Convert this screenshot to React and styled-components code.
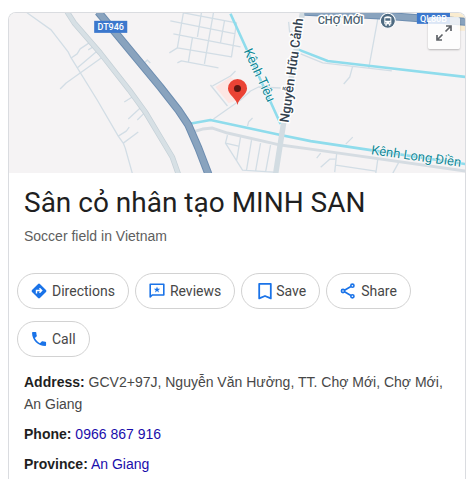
import React from "react";
import styled, { createGlobalStyle } from "styled-components";

const GlobalStyle = createGlobalStyle`
  * { box-sizing: border-box; }
  body {
    margin: 0;
    background: #fff;
    font-family: "Liberation Sans", Arial, sans-serif;
    font-size: 14px;
    color: #474747;
  }
`;

const Card = styled.article`
  margin: 12px 8px 0;
  min-height: calc(100vh - 12px);
  border: 1px solid #dadce0;
  border-bottom: 0;
  border-radius: 8px 8px 0 0;
  overflow: hidden;
`;

const MapFrame = styled.div`
  position: relative;
  height: 160px;
  background: #f5f3f4;
`;

const MapDrawing = styled.svg`
  display: block;
  width: 100%;
  height: 100%;
  font-family: Roboto, sans-serif;
`;

const Roads = styled.g`
  fill: none;
  stroke: ${(p) => p.$color};
  stroke-width: ${(p) => p.$width};
  stroke-linejoin: round;
`;

const MapLabel = styled.text`
  font-size: ${(p) => p.$size}px;
  font-weight: ${(p) => p.$weight || 500};
  fill: ${(p) => p.$color};
  stroke: #fff;
  stroke-width: ${(p) => p.$halo || 0};
  stroke-linejoin: round;
  paint-order: stroke;
`;

const ExpandButton = styled.button`
  position: absolute;
  top: 4px;
  right: 5px;
  width: 32px;
  height: 32px;
  padding: 0;
  display: grid;
  place-items: center;
  border: 0;
  border-radius: 2px;
  background: rgba(255, 255, 255, 0.82);
  box-shadow: 0 1px 2px rgba(0, 0, 0, 0.25);
  cursor: pointer;
`;

const Heading = styled.header`
  padding: 12px 15px 0;
`;

const Title = styled.h1`
  margin: 0;
  font: 400 28px/36px Roboto, sans-serif;
  color: #1f1f1f;
`;

const Category = styled.p`
  margin: 4px 0 0;
  line-height: 22px;
  color: #5e5e5e;
`;

const Actions = styled.div`
  display: flex;
  flex-wrap: wrap;
  gap: 12px 6px;
  padding: 26px 8px 0;
`;

const ActionButton = styled.button`
  display: flex;
  align-items: center;
  gap: 3px;
  height: 36px;
  padding: 0 13px 0 11px;
  border: 1px solid #d2d2d2;
  border-radius: 18px;
  background: #fff;
  color: #474747;
  font: 400 14px/20px Roboto, sans-serif;
  cursor: pointer;
`;

const ActionIcon = styled.svg`
  width: 20px;
  height: 20px;
  color: #1a73e8;
`;

const Facts = styled.div`
  display: flex;
  flex-direction: column;
  gap: 8px;
  padding: 14px 15px 3px;
`;

const Fact = styled.p`
  margin: 0;
  line-height: 22px;
`;

const Label = styled.strong`
  color: #1f1f1f;
`;

const FactLink = styled.a`
  color: #1a0dab;
  text-decoration: none;
`;

function AreaMap() {
  return (
    <MapDrawing viewBox="9 13 455 160" preserveAspectRatio="xMidYMid slice" role="img" aria-label="Map">
      <rect x="-500" y="13" width="1500" height="160" fill="#f5f3f4" />
      <path d="M215 87L230 77L247 88L241 99L228 103Z" fill="#fde6e3" />
      <path d="M445 13H465V20L445 18ZM455 25H465V31H458Z" fill="#faecd0" />
      <Roads $color="#d2dde5" $width={1.3}>
        <path d="M27 13L51 30L68 52L71 58L97 100L118 136L123 143L125 148L132 173" />
        <path d="M71 58L77 54L80 49L89 43M88 50L93 47M77 68L97 51M60 89L66 83L101 58" />
        <path d="M124 102L132 97M128 119L141 107M137 120L144 113M118 136L126 131L129 127M123 143L138 132" />
        <path d="M144 63L147 60L150 63" />
        <path d="M169 53L177 48L183 13L236 23L231 57L177 48M170 21L235 34M173 34L240 47" />
        <path d="M201 13L197 37M213 13L204 64M224 21L220 43M192 38L188 62M177 63L181 61L218 68" />
        <path d="M235 71L230 76L212 86M210 85L227 106M213 119L240 100L250 91L258 87L280 88M288 22L289 32L294 33" />
        <path d="M227 135L225 143L242 170L273 172M225 143L238 146M240 137L236 161M251 140L246 170M260 143L255 171M270 145L265 172" />
        <path d="M247 126L248 122L252 118M345 144L352 137M316 158L320 153M320 167L329 159L335 159" />
        <path d="M336 153L334 172M335 165L375 171M377 159L375 173M398 162L392 173" />
        <path d="M377 19L368 68M352 66L349 77L343 84M300 54L322 63L391 71" />
      </Roads>
      <Roads $color="#c5d0d7" $width={5.5}>
        <path d="M67 12L74 23L100 53L129 90L145 112L160 137L172 157L178 174" />
      </Roads>
      <Roads $color="#d7e0e5" $width={4}>
        <path d="M67 12L74 23L100 53L129 90L145 112L160 137L172 157L178 174" />
      </Roads>
      <Roads $color="#d5dce2" $width={3}>
        <path d="M192 132L202 129L212 128L227 133L280 145L310 149L465 171" />
      </Roads>
      <Roads $color="#8fdcec" $width={2.6}>
        <path d="M230 14L280 124M188 124L210 120L280 135L310 141L370 150L465 164" />
        <path d="M296 49L327 61L370 66L465 77" />
      </Roads>
      <Roads $color="#d2dce2" $width={5.5}>
        <path d="M302 12L283 123L275 174" />
      </Roads>
      <Roads $color="#6d8db0" $width={8}>
        <path d="M98 12L160 87L178 110L188 125L198 148L208 174M304 12L385 16L465 22" />
      </Roads>
      <Roads $color="#89a3be" $width={6}>
        <path d="M98 12L160 87L178 110L188 125L198 148L208 174M304 12L385 16L465 22" />
      </Roads>

      <rect x="94" y="21" width="33" height="12" fill="#3c78cd" />
      <MapLabel $size={9} $color="#fff" x="110.5" y="30" textAnchor="middle">DT946</MapLabel>
      <rect x="416" y="12" width="33" height="12" fill="#3c78cd" />
      <MapLabel $size={9} $color="#fff" x="432.5" y="22" textAnchor="middle">QL80B</MapLabel>

      <MapLabel $size={13} $weight={400} $color="#0f8796" $halo={1} transform="translate(243 51) rotate(65)">Kênh Tiêu</MapLabel>
      <MapLabel $size={13} $weight={500} $color="#33414e" $halo={3} transform="translate(288 123) rotate(-82)">Nguyễn Hữu Cảnh</MapLabel>
      <MapLabel $size={13} $weight={400} $color="#0f8796" $halo={1} transform="translate(370 154) rotate(8)">Kênh Long Điền</MapLabel>
      <MapLabel $size={11} $color="#4c5f70" $halo={3} x="317" y="24">CHỢ MỚI</MapLabel>

      <circle cx="387" cy="21" r="7.5" fill="#4f6b82" stroke="#fff" />
      <path d="M383.5 17.5Q387 15.5 390.5 17.5V24.5H389.5V26H388V24.5H386V26H384.5V24.5H383.5Z" fill="#fff" />
      <path d="M384.5 18.5H389.5V21H384.5Z" fill="#4f6b82" />
      <circle cx="385" cy="23" r=".6" fill="#4f6b82" />
      <circle cx="389" cy="23" r=".6" fill="#4f6b82" />

      <path d="M237 105C236 98 227.5 95 227.5 88.5A9.5 9.5 0 0 1 246.5 88.5C246.5 95 238 98 237 105Z" fill="#ea4335" />
      <circle cx="237" cy="88.5" r="3.5" fill="#5d1712" />
    </MapDrawing>
  );
}

const glyphs = {
  directions: (
    <>
      <rect x="4.4" y="4.4" width="11.2" height="11.2" rx="1.3" transform="rotate(45 10 10)" fill="currentColor" />
      <path d="M7.5 12.5V9.5H12M10.5 7.3L12.7 9.5L10.5 11.7" fill="none" stroke="#fff" strokeWidth="1.4" />
    </>
  ),
  reviews: (
    <>
      <path d="M3.2 16V3.2H16.8V14H5.2Z" fill="none" stroke="currentColor" strokeWidth="1.6" strokeLinejoin="round" />
      <path d="M10 5.5L10.8 7.8H13.2L11.3 9.2L12 11.5L10 10.1L8 11.5L8.7 9.2L6.8 7.8H9.2Z" fill="currentColor" />
    </>
  ),
  save: <path d="M6.2 2.8H17.8V17.4L12 15L6.2 17.4Z" fill="none" stroke="currentColor" strokeWidth="1.8" strokeLinejoin="round" />,
  share: (
    <g fill="none" stroke="currentColor" strokeWidth="1.6">
      <path d="M6.5 9.2L12.9 5.5M6.5 10.8L12.9 14.5" />
      <circle cx="5" cy="10" r="1.6" />
      <circle cx="14.4" cy="4.7" r="1.6" />
      <circle cx="14.4" cy="15.3" r="1.6" />
    </g>
  ),
  call: (
    <path
      transform="translate(.7 .7) scale(.78)"
      d="M6.62 10.79c1.44 2.83 3.76 5.14 6.59 6.59l2.2-2.2c.27-.27.67-.36 1.02-.24 1.12.37 2.33.57 3.57.57.55 0 1 .45 1 1V20c0 .55-.45 1-1 1-9.39 0-17-7.61-17-17 0-.55.45-1 1-1h3.5c.55 0 1 .45 1 1 0 1.25.2 2.45.57 3.57.11.35.03.74-.25 1.02l-2.2 2.2z"
      fill="currentColor"
    />
  ),
};

const actions = [
  ["directions", "Directions"],
  ["reviews", "Reviews"],
  ["save", "Save"],
  ["share", "Share"],
  ["call", "Call"],
];

export default function App() {
  return (
    <>
      <GlobalStyle />
      <Card>
        <MapFrame>
          <AreaMap />
          <ExpandButton type="button" aria-label="Expand map">
            <svg width="18" height="18" viewBox="0 0 18 18" fill="none" stroke="#5f6368" strokeWidth="1.7">
              <path d="M10.5 7.5L16 2M11 2H16V7M7.5 10.5L2 16M2 11V16H7" />
            </svg>
          </ExpandButton>
        </MapFrame>
        <Heading>
          <Title>Sân cỏ nhân tạo MINH SAN</Title>
          <Category>Soccer field in Vietnam</Category>
        </Heading>
        <Actions>
          {actions.map(([icon, label]) => (
            <ActionButton type="button" key={icon}>
              <ActionIcon viewBox="0 0 20 20" aria-hidden="true">{glyphs[icon]}</ActionIcon>
              {label}
            </ActionButton>
          ))}
        </Actions>
        <Facts>
          <Fact><Label>Address:</Label> GCV2+97J, Nguyễn Văn Hưởng, TT. Chợ Mới, Chợ Mới, An Giang</Fact>
          <Fact><Label>Phone:</Label> <FactLink href="tel:0966867916">0966 867 916</FactLink></Fact>
          <Fact><Label>Province:</Label> <FactLink href="#an-giang">An Giang</FactLink></Fact>
        </Facts>
      </Card>
    </>
  );
}
